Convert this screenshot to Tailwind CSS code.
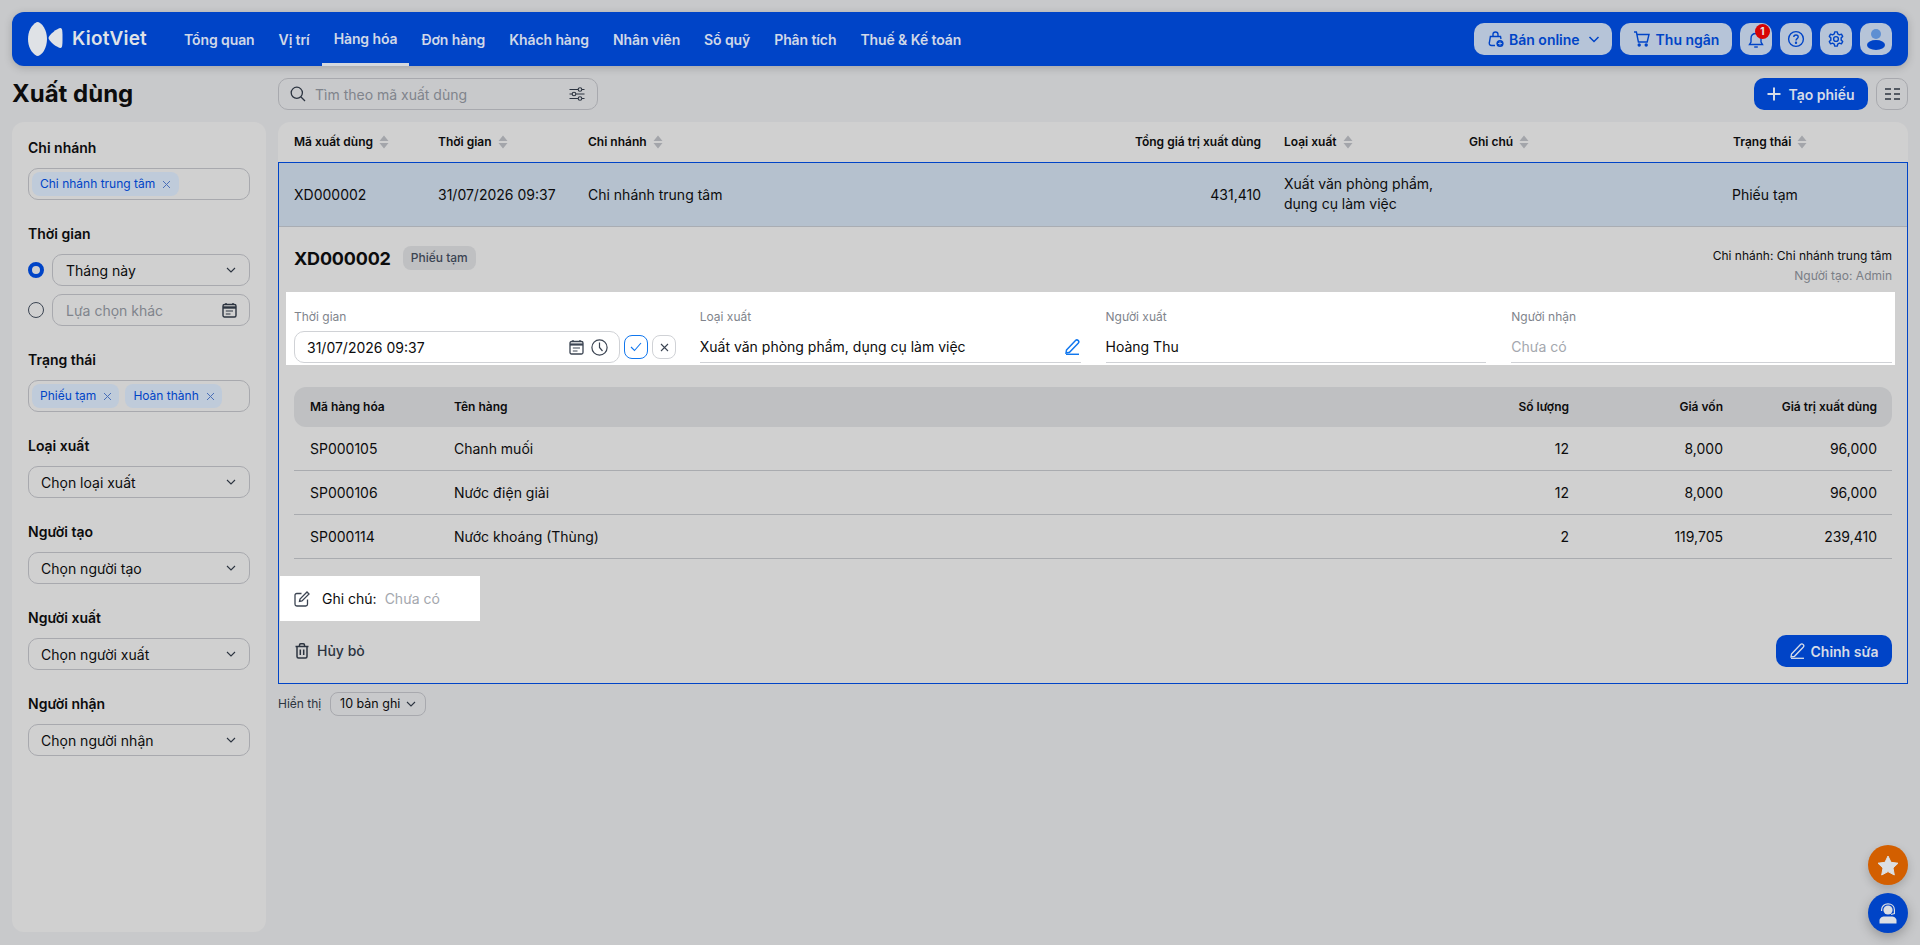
<!DOCTYPE html>
<html lang="vi">

<head>
    <meta charset="UTF-8">
    <meta name="viewport" content="width=device-width, initial-scale=1.0">
    <title>Xuất dùng</title>
    <script src="https://cdn.jsdelivr.net/npm/@tailwindcss/browser@4"></script>
</head>

<body class="bg-[#c8c9cb] text-[#0c0c0d] font-[Inter,sans-serif] text-[14px] h-screen overflow-hidden">
    <div class="relative h-[945px] px-3 pt-3">

        <!-- Top navigation -->
        <header class="h-[54px] rounded-xl bg-[#0044c7] shadow-[0_2px_8px_rgba(0,0,0,0.18)] flex items-stretch pl-4 pr-4">
            <div class="flex items-center w-[144px] shrink-0">
                <svg width="35" height="34" viewBox="0 0 35 34" class="text-[#dfe2e6]" fill="currentColor">
                    <path d="M9 0 C14 0 19 8 19 17 C19 26 14 34 9 34 C3 31 0 24 0 17 C0 10 3 3 9 0Z" />
                    <path d="M32.5 6 C34.5 6 34.5 10 34.5 16 C34.5 22 34.5 26 32.5 26 C29.5 26 20.5 19 20.5 16 C20.5 13 29.5 6 32.5 6Z" />
                </svg>
                <span class="ml-[9px] text-[19px] font-semibold text-[#dfe2e6] tracking-[0.2px]">KiotViet</span>
            </div>
            <nav class="flex items-stretch text-[14px] font-semibold tracking-[-0.1px] text-[#d0d8e8]">
                <a class="flex items-center px-3 pt-[1px]">Tổng quan</a>
                <a class="flex items-center px-3 pt-[1px]">Vị trí</a>
                <a class="flex items-center px-3 pt-[1px] border-b-[3px] border-[#d4d8de]">Hàng hóa</a>
                <a class="flex items-center px-3 pt-[1px]">Đơn hàng</a>
                <a class="flex items-center px-3 pt-[1px]">Khách hàng</a>
                <a class="flex items-center px-3 pt-[1px]">Nhân viên</a>
                <a class="flex items-center px-3 pt-[1px]">Sổ quỹ</a>
                <a class="flex items-center px-3 pt-[1px]">Phân tích</a>
                <a class="flex items-center px-3 pt-[1px]">Thuế &amp; Kế toán</a>
            </nav>
            <div class="ml-auto flex items-center gap-2 text-[#0044c7] font-semibold">
                <button class="h-8 w-[138px] rounded-[10px] bg-[#b6c4d8] flex items-center pl-[13px] gap-[4px]">
                    <svg width="18" height="18" viewBox="0 0 18 18" fill="none" stroke="currentColor" stroke-width="1.4">
                        <path d="M8 15.5H4.5C3 15.5 2 14.5 2.3 13L3.4 6.5H13.5L14 9" />
                        <path d="M6 6.5V4.5C6 3 7 2 8.5 2S11 3 11 4.5V6.5" />
                        <circle cx="13" cy="13.5" r="3.6" fill="currentColor" stroke="none" />
                        <path d="M13 11.5V15.5M11 13.5H15" stroke="#b6c4d8" stroke-width="0.8" />
                    </svg>
                    Bán online
                    <svg width="14" height="14" viewBox="0 0 14 14" fill="none" stroke="currentColor" stroke-width="1.5" class="ml-[3px]"><path d="M2.5 5L7 9.5L11.5 5" /></svg>
                </button>
                <button class="h-8 w-[112px] rounded-[10px] bg-[#b6c4d8] flex items-center justify-center gap-[5px]">
                    <svg width="18" height="18" viewBox="0 0 18 18" fill="none" stroke="currentColor" stroke-width="1.4">
                        <path d="M1 2H3.4L5.4 12H14.2L16 4.5H3.9" />
                        <circle cx="6.2" cy="15" r="1" fill="currentColor" />
                        <circle cx="13.2" cy="15" r="1" fill="currentColor" />
                    </svg>
                    Thu ngân
                </button>
                <button class="relative h-8 w-8 rounded-[10px] bg-[#b6c4d8] flex items-center justify-center">
                    <svg width="16" height="18" viewBox="0 0 16 18" fill="none" stroke="currentColor" stroke-width="1.4" class="mt-[2px]">
                        <path d="M3 11V7.5C3 4.5 5 2.5 8 2.5S13 4.5 13 7.5V11L14.5 13.5H1.5L3 11Z" />
                        <path d="M6.2 16H9.8" />
                    </svg>
                    <span class="absolute top-[1px] right-[2px] w-[15px] h-[15px] rounded-full bg-[#d80404] text-[#e8e8e8] text-[10px] font-bold leading-[15px] text-center">1</span>
                </button>
                <button class="h-8 w-8 rounded-[10px] bg-[#b6c4d8] flex items-center justify-center">
                    <svg width="18" height="18" viewBox="0 0 18 18" fill="none" stroke="currentColor" stroke-width="1.4">
                        <circle cx="9" cy="9" r="7.4" />
                        <path d="M6.8 7C6.8 5.7 7.8 5 9 5S11.2 5.8 11.2 7C11.2 8.6 9 8.7 9 10.4" />
                        <circle cx="9" cy="12.8" r="0.5" fill="currentColor" />
                    </svg>
                </button>
                <button class="h-8 w-8 rounded-[10px] bg-[#b6c4d8] flex items-center justify-center">
                    <svg width="18" height="18" viewBox="0 0 24 24" fill="none" stroke="currentColor" stroke-width="1.9" stroke-linejoin="round">
                        <path d="M10.3 2.5H13.7L14.3 5.2L16.6 6.5L19.2 5.6L20.9 8.6L18.9 10.5V13.5L20.9 15.4L19.2 18.4L16.6 17.5L14.3 18.8L13.7 21.5H10.3L9.7 18.8L7.4 17.5L4.8 18.4L3.1 15.4L5.1 13.5V10.5L3.1 8.6L4.8 5.6L7.4 6.5L9.7 5.2Z" />
                        <circle cx="12" cy="12" r="3.2" />
                    </svg>
                </button>
                <button class="h-8 w-8 rounded-[10px] bg-[#b6c4d8] flex items-center justify-center">
                    <svg width="20" height="22" viewBox="0 0 20 22">
                        <circle cx="10" cy="6" r="5" fill="#5e8fd2" />
                        <ellipse cx="10" cy="17" rx="9" ry="5" fill="#0044c7" />
                    </svg>
                </button>
            </div>
        </header>

        <!-- Page title and search -->
        <div class="mt-3 h-8 flex items-center">
            <h1 class="w-[266px] text-[24px] font-bold leading-8">Xuất dùng</h1>
            <div class="h-8 w-[320px] rounded-[10px] border border-[#a8a9ae] flex items-center pl-[11px] pr-[12px]">
                <svg width="16" height="16" viewBox="0 0 16 16" fill="none" stroke="#2c3440" stroke-width="1.3">
                    <circle cx="6.8" cy="6.8" r="5.6" />
                    <path d="M11 11L15 15" />
                </svg>
                <span class="ml-[9px] text-[#80848c]">Tìm theo mã xuất dùng</span>
                <svg width="16" height="16" viewBox="0 0 16 16" fill="none" stroke="#2c3440" stroke-width="1.1" class="ml-auto">
                    <path d="M0.5 3.5H9M13 3.5H15.5M0.5 8H3M7 8H15.5M0.5 12.5H9M13 12.5H15.5" />
                    <circle cx="11" cy="3.5" r="1.8" />
                    <circle cx="5" cy="8" r="1.8" />
                    <circle cx="11" cy="12.5" r="1.8" />
                </svg>
            </div>
            <button class="ml-auto h-8 w-[114px] rounded-[10px] bg-[#0044c7] text-[#d6dce8] font-semibold flex items-center justify-center gap-[7px]">
                <svg width="14" height="14" viewBox="0 0 14 14" stroke="currentColor" stroke-width="2"><path d="M7 0.5V13.5M0.5 7H13.5" /></svg>
                Tạo phiếu
            </button>
            <button class="ml-2 h-8 w-8 rounded-[10px] border border-[#a8a9ae] flex items-center justify-center">
                <svg width="15" height="12" viewBox="0 0 15 12" stroke="#2c3440" stroke-width="1.6"><path d="M0 1H6M9 1H15M0 6H6M9 6H15M0 11H6M9 11H15" /></svg>
            </button>
        </div>

        <div class="mt-3 flex gap-3 items-start">
            <!-- Filter sidebar -->
            <aside class="w-[254px] h-[810px] shrink-0 rounded-xl bg-[#d0d0d0] p-4 text-[14px]">
                <div class="mb-6">
                    <div class="h-5 leading-5 mb-[10px] font-semibold">Chi nhánh</div>
                    <div class="h-8 rounded-[10px] border border-[#a8a9ae] flex items-center px-[3px]">
                        <span class="h-6 rounded-lg bg-[#bfcbda] text-[#0044c7] text-[12px] leading-6 pl-[8px] pr-[8px] flex items-center gap-[7px]">Chi nhánh trung tâm
                            <svg width="9" height="9" viewBox="0 0 9 9" stroke="#4a6fb8" stroke-width="1"><path d="M1 1L8 8M8 1L1 8" /></svg>
                        </span>
                    </div>
                </div>
                <div class="mb-6">
                    <div class="h-5 leading-5 mb-[10px] font-semibold">Thời gian</div>
                    <div class="flex items-center gap-2">
                        <span class="w-4 h-4 rounded-full border-[4px] border-[#0044c7] shrink-0"></span>
                        <div class="h-8 flex-1 rounded-[10px] border border-[#a8a9ae] flex items-center pl-[13px] pr-[13px]">Tháng này
                            <svg width="10" height="6" viewBox="0 0 10 6" fill="none" stroke="#2c3440" stroke-width="1.1" class="ml-auto"><path d="M1 1L5 5L9 1" /></svg>
                        </div>
                    </div>
                    <div class="flex items-center gap-2 mt-2">
                        <span class="w-4 h-4 rounded-full border border-[#3b4452] shrink-0"></span>
                        <div class="h-8 flex-1 rounded-[10px] border border-[#a8a9ae] flex items-center pl-[13px] pr-[12px] text-[#80848c]">Lựa chọn khác
                            <svg width="15" height="16" viewBox="0 0 15 16" class="ml-auto" fill="none" stroke="#2c3440" stroke-width="1.4">
                                <rect x="1" y="2.5" width="13" height="12.5" rx="1.5" />
                                <path d="M1 5.5H14" stroke-width="2.4" />
                                <path d="M4 1V3M11 1V3" />
                                <path d="M3.8 9H11M3.8 12H8.5" stroke-width="1.2" />
                            </svg>
                        </div>
                    </div>
                </div>
                <div class="mb-6">
                    <div class="h-5 leading-5 mb-[10px] font-semibold">Trạng thái</div>
                    <div class="h-8 rounded-[10px] border border-[#a8a9ae] flex items-center gap-[6px] px-[3px]">
                        <span class="h-6 rounded-lg bg-[#bfcbda] text-[#0044c7] text-[12px] leading-6 pl-[8px] pr-[7px] flex items-center gap-[7px]">Phiếu tạm
                            <svg width="9" height="9" viewBox="0 0 9 9" stroke="#4a6fb8" stroke-width="1"><path d="M1 1L8 8M8 1L1 8" /></svg>
                        </span>
                        <span class="h-6 rounded-lg bg-[#bfcbda] text-[#0044c7] text-[12px] leading-6 pl-[8px] pr-[7px] flex items-center gap-[7px]">Hoàn thành
                            <svg width="9" height="9" viewBox="0 0 9 9" stroke="#4a6fb8" stroke-width="1"><path d="M1 1L8 8M8 1L1 8" /></svg>
                        </span>
                    </div>
                </div>
                <div class="mb-6">
                    <div class="h-5 leading-5 mb-[10px] font-semibold">Loại xuất</div>
                    <div class="h-8 rounded-[10px] border border-[#a8a9ae] flex items-center pl-[12px] pr-[13px]">Chọn loại xuất
                        <svg width="10" height="6" viewBox="0 0 10 6" fill="none" stroke="#2c3440" stroke-width="1.1" class="ml-auto"><path d="M1 1L5 5L9 1" /></svg>
                    </div>
                </div>
                <div class="mb-6">
                    <div class="h-5 leading-5 mb-[10px] font-semibold">Người tạo</div>
                    <div class="h-8 rounded-[10px] border border-[#a8a9ae] flex items-center pl-[12px] pr-[13px]">Chọn người tạo
                        <svg width="10" height="6" viewBox="0 0 10 6" fill="none" stroke="#2c3440" stroke-width="1.1" class="ml-auto"><path d="M1 1L5 5L9 1" /></svg>
                    </div>
                </div>
                <div class="mb-6">
                    <div class="h-5 leading-5 mb-[10px] font-semibold">Người xuất</div>
                    <div class="h-8 rounded-[10px] border border-[#a8a9ae] flex items-center pl-[12px] pr-[13px]">Chọn người xuất
                        <svg width="10" height="6" viewBox="0 0 10 6" fill="none" stroke="#2c3440" stroke-width="1.1" class="ml-auto"><path d="M1 1L5 5L9 1" /></svg>
                    </div>
                </div>
                <div>
                    <div class="h-5 leading-5 mb-[10px] font-semibold">Người nhận</div>
                    <div class="h-8 rounded-[10px] border border-[#a8a9ae] flex items-center pl-[12px] pr-[13px]">Chọn người nhận
                        <svg width="10" height="6" viewBox="0 0 10 6" fill="none" stroke="#2c3440" stroke-width="1.1" class="ml-auto"><path d="M1 1L5 5L9 1" /></svg>
                    </div>
                </div>
            </aside>

            <main class="flex-1 min-w-0">
                <!-- List header -->
                <div class="h-10 rounded-t-xl bg-[#d0d0d0] grid grid-cols-[160px_150px_300px_396px_185px_264px_175px] items-center text-[12px] font-semibold">
                    <div class="pl-4 flex items-center gap-[6px]">Mã xuất dùng
                        <svg width="10" height="14" viewBox="0 0 10 14" fill="#a3a5aa"><path d="M5 0.5L9.5 6H0.5ZM5 13.5L0.5 8H9.5Z" /></svg>
                    </div>
                    <div class="flex items-center gap-[6px]">Thời gian
                        <svg width="10" height="14" viewBox="0 0 10 14" fill="#a3a5aa"><path d="M5 0.5L9.5 6H0.5ZM5 13.5L0.5 8H9.5Z" /></svg>
                    </div>
                    <div class="flex items-center gap-[6px]">Chi nhánh
                        <svg width="10" height="14" viewBox="0 0 10 14" fill="#a3a5aa"><path d="M5 0.5L9.5 6H0.5ZM5 13.5L0.5 8H9.5Z" /></svg>
                    </div>
                    <div class="text-right pr-[23px]">Tổng giá trị xuất dùng</div>
                    <div class="flex items-center gap-[6px]">Loại xuất
                        <svg width="10" height="14" viewBox="0 0 10 14" fill="#a3a5aa"><path d="M5 0.5L9.5 6H0.5ZM5 13.5L0.5 8H9.5Z" /></svg>
                    </div>
                    <div class="flex items-center gap-[6px]">Ghi chú
                        <svg width="10" height="14" viewBox="0 0 10 14" fill="#a3a5aa"><path d="M5 0.5L9.5 6H0.5ZM5 13.5L0.5 8H9.5Z" /></svg>
                    </div>
                    <div class="flex items-center gap-[6px]">Trạng thái
                        <svg width="10" height="14" viewBox="0 0 10 14" fill="#a3a5aa"><path d="M5 0.5L9.5 6H0.5ZM5 13.5L0.5 8H9.5Z" /></svg>
                    </div>
                </div>

                <!-- Selected row with expanded detail -->
                <div class="border border-[#0044c7] bg-[#d0d0d0] h-[522px]">
                    <div class="h-16 bg-[#b5c1ce] border-b border-[#a9adb3] grid grid-cols-[159px_150px_300px_396px_185px_264px_174px] items-center pb-[1px]">
                        <div class="pl-[15px]">XD000002</div>
                        <div>31/07/2026 09:37</div>
                        <div>Chi nhánh trung tâm</div>
                        <div class="text-right pr-[23px]">431,410</div>
                        <div class="leading-5">Xuất văn phòng phẩm,<br>dụng cụ làm việc</div>
                        <div></div>
                        <div class="-ml-[1px]">Phiếu tạm</div>
                    </div>

                    <div class="h-[65px] pl-[15px] pr-[15px] pt-[19px] flex items-start justify-between">
                        <div class="flex items-center h-6">
                            <span class="text-[18px] font-bold tracking-[-0.2px]">XD000002</span>
                            <span class="ml-3 h-6 px-2 rounded-lg bg-[#bfc0c2] text-[#3b4452] text-[12px] font-medium leading-6">Phiếu tạm</span>
                        </div>
                        <div class="text-[12px] leading-5 text-right">
                            <div>Chi nhánh: Chi nhánh trung tâm</div>
                            <div class="text-[#7a7e86]">Người tạo: Admin</div>
                        </div>
                    </div>

                    <!-- Editable fields -->
                    <div class="h-[73px] ml-[7px] mr-3 bg-white pl-2 pr-[3px] pt-[17px] grid grid-cols-4 gap-x-[25px]">
                        <div>
                            <div class="text-[12px] leading-4 text-[#80848c]">Thời gian</div>
                            <div class="mt-[6px] flex items-center gap-1">
                                <div class="h-8 w-[326px] shrink-0 rounded-[10px] border border-[#d0d2d6] flex items-center pl-[12px] pr-[11px]">31/07/2026 09:37
                                    <svg width="15" height="16" viewBox="0 0 15 16" class="ml-auto" fill="none" stroke="#3b4452" stroke-width="1.3">
                                        <rect x="1" y="2.5" width="13" height="12.5" rx="1.5" />
                                        <path d="M1 5.5H14" stroke-width="2.2" />
                                        <path d="M4 1V3M11 1V3" />
                                        <path d="M3.8 9H11M3.8 12H8.5" stroke-width="1.1" />
                                    </svg>
                                    <svg width="17" height="17" viewBox="0 0 17 17" class="ml-[7px]" fill="none" stroke="#3b4452" stroke-width="1.2">
                                        <circle cx="8.5" cy="8.5" r="7.6" />
                                        <path d="M8.5 3.5V8.5L11.5 12" />
                                    </svg>
                                </div>
                                <button class="w-6 h-6 shrink-0 rounded-lg border border-[#1177ee] flex items-center justify-center">
                                    <svg width="12" height="10" viewBox="0 0 12 10" fill="none" stroke="#1177ee" stroke-width="1.1"><path d="M1 5L4.5 8.5L11 1" /></svg>
                                </button>
                                <button class="w-6 h-6 shrink-0 rounded-lg border border-[#d0d2d6] flex items-center justify-center">
                                    <svg width="9" height="9" viewBox="0 0 9 9" stroke="#3b4452" stroke-width="1.1"><path d="M1 1L8 8M8 1L1 8" /></svg>
                                </button>
                            </div>
                        </div>
                        <div>
                            <div class="text-[12px] leading-4 text-[#80848c]">Loại xuất</div>
                            <div class="mt-[6px] h-8 border-b border-[#d0d2d6] flex items-center justify-between">Xuất văn phòng phẩm, dụng cụ làm việc
                                <svg width="15" height="16" viewBox="0 0 15 16" fill="none" stroke="#1177ee" stroke-width="1.5" class="mr-[1px]">
                                    <path d="M1.5 11L10.5 1.5C11.3 0.7 12.5 0.8 13.3 1.6C14 2.4 14 3.4 13.2 4.2L4.5 13.3L1 14Z" />
                                    <path d="M1 15.3H14" />
                                </svg>
                            </div>
                        </div>
                        <div>
                            <div class="text-[12px] leading-4 text-[#80848c]">Người xuất</div>
                            <div class="mt-[6px] h-8 border-b border-[#d0d2d6] flex items-center">Hoàng Thu</div>
                        </div>
                        <div>
                            <div class="text-[12px] leading-4 text-[#80848c]">Người nhận</div>
                            <div class="mt-[6px] h-8 border-b border-[#d0d2d6] flex items-center text-[#a4a7ae]">Chưa có</div>
                        </div>
                    </div>

                    <!-- Items table -->
                    <div class="mt-[22px] ml-[15px] mr-[15px]">
                        <div class="h-10 rounded-xl bg-[#bfc0c2] grid grid-cols-[160px_1fr_154px_154px_169px] items-center text-[12px] font-semibold">
                            <div class="pl-4">Mã hàng hóa</div>
                            <div>Tên hàng</div>
                            <div class="text-right">Số lượng</div>
                            <div class="text-right">Giá vốn</div>
                            <div class="text-right pr-[15px]">Giá trị xuất dùng</div>
                        </div>
                        <div class="h-11 border-b border-[#a9abaf] grid grid-cols-[160px_1fr_154px_154px_169px] items-center">
                            <div class="pl-4">SP000105</div>
                            <div>Chanh muối</div>
                            <div class="text-right">12</div>
                            <div class="text-right">8,000</div>
                            <div class="text-right pr-[15px]">96,000</div>
                        </div>
                        <div class="h-11 border-b border-[#a9abaf] grid grid-cols-[160px_1fr_154px_154px_169px] items-center">
                            <div class="pl-4">SP000106</div>
                            <div>Nước điện giải</div>
                            <div class="text-right">12</div>
                            <div class="text-right">8,000</div>
                            <div class="text-right pr-[15px]">96,000</div>
                        </div>
                        <div class="h-11 border-b border-[#a9abaf] grid grid-cols-[160px_1fr_154px_154px_169px] items-center">
                            <div class="pl-4">SP000114</div>
                            <div>Nước khoáng (Thùng)</div>
                            <div class="text-right">2</div>
                            <div class="text-right">119,705</div>
                            <div class="text-right pr-[15px]">239,410</div>
                        </div>
                    </div>

                    <!-- Note -->
                    <div class="mt-[17px] ml-[1px] h-[45px] w-[200px] bg-white flex items-center pl-[14px]">
                        <svg width="16" height="16" viewBox="0 0 16 16" fill="none" stroke="#3b4452" stroke-width="1.3">
                            <path d="M7.5 2.5H2.8C1.8 2.5 1 3.3 1 4.3V13.2C1 14.2 1.8 15 2.8 15H11.7C12.7 15 13.5 14.2 13.5 13.2V8.5" />
                            <path d="M5.5 10.5L6 8L13 1L15 3L8 10Z" />
                        </svg>
                        <span class="ml-3">Ghi chú:</span>
                        <span class="ml-2 text-[#a4a7ae]">Chưa có</span>
                    </div>

                    <!-- Actions -->
                    <div class="mt-[14px] pl-4 pr-[15px] flex items-center justify-between">
                        <button class="flex items-center gap-2 text-[#2c3440] font-medium -mt-[1px]">
                            <svg width="14" height="16" viewBox="0 0 14 16" fill="none" stroke="#2c3440" stroke-width="1.5">
                                <path d="M0.5 3.5H13.5M4.5 3.5V2C4.5 1.3 5 0.8 5.7 0.8H8.3C9 0.8 9.5 1.3 9.5 2V3.5" />
                                <path d="M2 3.5V13.5C2 14.4 2.6 15 3.5 15H10.5C11.4 15 12 14.4 12 13.5V3.5" />
                                <path d="M5.3 6.5V12M8.7 6.5V12" />
                            </svg>
                            Hủy bỏ
                        </button>
                        <button class="h-8 w-[116px] rounded-[10px] bg-[#0044c7] text-[#d6dce8] font-semibold flex items-center justify-center gap-[6px]">
                            <svg width="15" height="16" viewBox="0 0 15 16" fill="none" stroke="currentColor" stroke-width="1.3">
                                <path d="M1.5 11L10.5 1.5C11.3 0.7 12.5 0.8 13.3 1.6C14 2.4 14 3.4 13.2 4.2L4.5 13.3L1 14Z" />
                                <path d="M1 15.3H14" />
                            </svg>
                            Chỉnh sửa
                        </button>
                    </div>
                </div>

                <!-- Page size -->
                <div class="mt-2 flex items-center">
                    <span class="text-[#2c3440] text-[12px]">Hiển thị</span>
                    <button class="ml-[9px] h-6 w-24 rounded-lg border border-[#a8a9ae] flex items-center justify-center gap-[6px] text-[12.5px]">10 bản ghi
                        <svg width="10" height="6" viewBox="0 0 10 6" fill="none" stroke="#2c3440" stroke-width="1.1"><path d="M1 1L5 5L9 1" /></svg>
                    </button>
                </div>
            </main>
        </div>

        <!-- Floating buttons -->
        <button class="absolute right-3 top-[845px] w-10 h-10 rounded-full bg-[#d35f00] shadow-[0_4px_10px_rgba(0,0,0,0.18)] flex items-center justify-center">
            <svg width="22" height="21" viewBox="0 0 22 21" fill="#dcdfe3"><path d="M11 1L14 7.3L21 8.2L16 13L17.3 20L11 16.6L4.7 20L6 13L1 8.2L8 7.3Z" stroke="#dcdfe3" stroke-width="1" stroke-linejoin="round" /></svg>
        </button>
        <button class="absolute right-3 top-[893px] w-10 h-10 rounded-full bg-[#0044c7] shadow-[0_4px_12px_rgba(0,0,0,0.25)] flex items-center justify-center">
            <svg width="20" height="21" viewBox="0 0 20 21">
                <circle cx="10" cy="7" r="4.6" fill="#dcdfe3" />
                <path d="M3.6 8V6.8C3.6 3.2 6.4 0.8 10 0.8S16.4 3.2 16.4 6.8V10.5L13 11.5" fill="none" stroke="#dcdfe3" stroke-width="1.2" />
                <path d="M1.5 20.5V17.5C1.5 15 4 13.5 6.5 13.5H13.5C16 13.5 18.5 15 18.5 17.5V20.5Z" fill="#dcdfe3" />
            </svg>
        </button>
    </div>
</body>

</html>
